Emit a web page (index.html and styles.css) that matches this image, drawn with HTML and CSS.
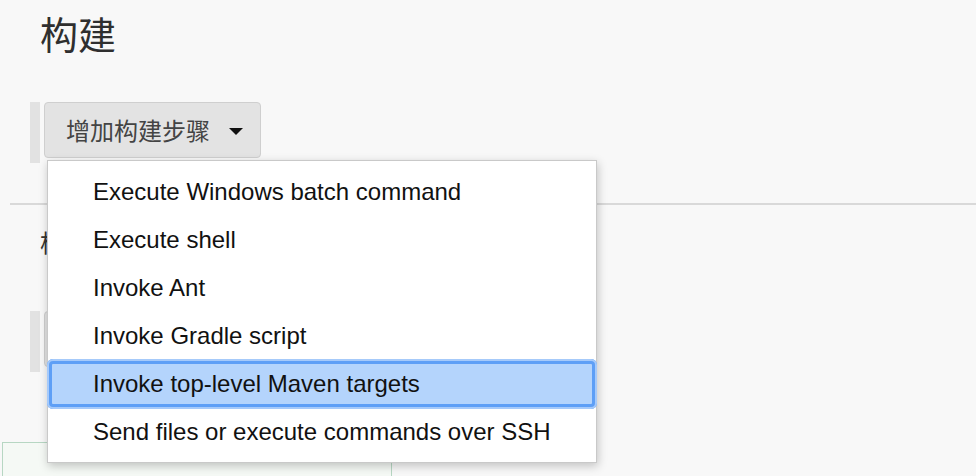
FILE: index.html
```html
<!DOCTYPE html>
<html lang="zh">
<head>
<meta charset="utf-8">
<title>构建</title>
<link rel="stylesheet" href="styles.css">
</head>
<body>
<div class="page">
  <section class="build">
    <h2 class="title">构建</h2>
    <div class="step-row">
      <div class="bar"></div>
      <div class="btn-wrap">
        <button class="add-btn"><span class="label">增加构建步骤</span><span class="caret"></span></button>
        <ul class="menu">
          <li class="item">Execute Windows batch command</li>
          <li class="item">Execute shell</li>
          <li class="item">Invoke Ant</li>
          <li class="item">Invoke Gradle script</li>
          <li class="item active">Invoke top-level Maven targets</li>
          <li class="item">Send files or execute commands over SSH</li>
        </ul>
      </div>
    </div>
  </section>
  <div class="divider"></div>
  <section class="post">
    <h3 class="subtitle">构建后操作</h3>
    <div class="step-row">
      <div class="bar"></div>
      <button class="add-btn"><span class="label">增加构建后操作步骤</span><span class="caret"></span></button>
    </div>
  </section>
  <div class="green-box"></div>
</div>
</body>
</html>
```
FILE: styles.css
```css
html, body {
  margin: 0;
  padding: 0;
  background: #f8f8f8;
  overflow: hidden;
  height: 476px;
}
body {
  font-family: "Liberation Sans", "Noto Sans CJK SC", Arial, sans-serif;
  color: #333;
}
.page {
  display: flex;
  flex-direction: column;
}
.build, .post {
  padding-left: 40px;
}
.title {
  margin: 11px 0 0 0;
  font-family: "Noto Sans CJK SC", sans-serif;
  font-weight: 400;
  font-size: 38px;
  line-height: 44px;
  color: #2f2f2f;
}
.step-row {
  display: flex;
  align-items: flex-start;
  margin-left: -10px;
}
.build .step-row {
  margin-top: 47px;
}
.bar {
  width: 10px;
  height: 61px;
  background: #e2e2e2;
  flex: none;
}
.btn-wrap {
  position: relative;
  margin-left: 4px;
}
.post .add-btn {
  margin-left: 4px;
}
.add-btn {
  display: flex;
  align-items: center;
  height: 56px;
  padding: 0 17px 0 21px;
  background: #e3e3e3;
  border: 1px solid #cfcfcf;
  border-radius: 4px;
  font-family: "Noto Sans CJK SC", sans-serif;
  font-size: 24px;
  color: #444;
  cursor: pointer;
}
.add-btn .label {
  line-height: 30px;
}
.caret {
  width: 0;
  height: 0;
  margin-left: 19px;
  margin-top: 3px;
  border-left: 7px solid transparent;
  border-right: 7px solid transparent;
  border-top: 7px solid #111;
}
.menu {
  position: absolute;
  left: 3px;
  top: 58px;
  width: 548px;
  margin: 0;
  padding: 7px 0 6px;
  list-style: none;
  background: #fff;
  border: 1px solid #c9c9c9;
  box-shadow: 1px 3px 9px rgba(0, 0, 0, 0.22);
  z-index: 5;
}
.item {
  height: 48px;
  line-height: 48px;
  padding-left: 45px;
  font-family: "Liberation Sans", Arial, sans-serif;
  font-size: 24px;
  color: #111;
  white-space: nowrap;
}
.item.active {
  margin: -1px -1px;
  padding-left: 46px;
  background: #b4d4fc;
  border-radius: 6px;
  box-shadow: inset 0 0 0 2px #a6cafa, inset 0 0 0 5px #5e9ff6;
  height: 50px;
  line-height: 50px;
}
.divider {
  margin: 40px 0 0 10px;
  height: 2px;
  background: #d9d9d9;
}
.subtitle {
  margin: 21px 0 0 0;
  font-family: "Noto Sans CJK SC", sans-serif;
  font-weight: 400;
  font-size: 24px;
  line-height: 32px;
  color: #333;
}
.post .step-row {
  margin-top: 53px;
}
.green-box {
  margin: 70px 0 0 2px;
  width: 388px;
  height: 40px;
  border: 1px solid #b7d7c3;
  background: #f5f9f5;
}
```
